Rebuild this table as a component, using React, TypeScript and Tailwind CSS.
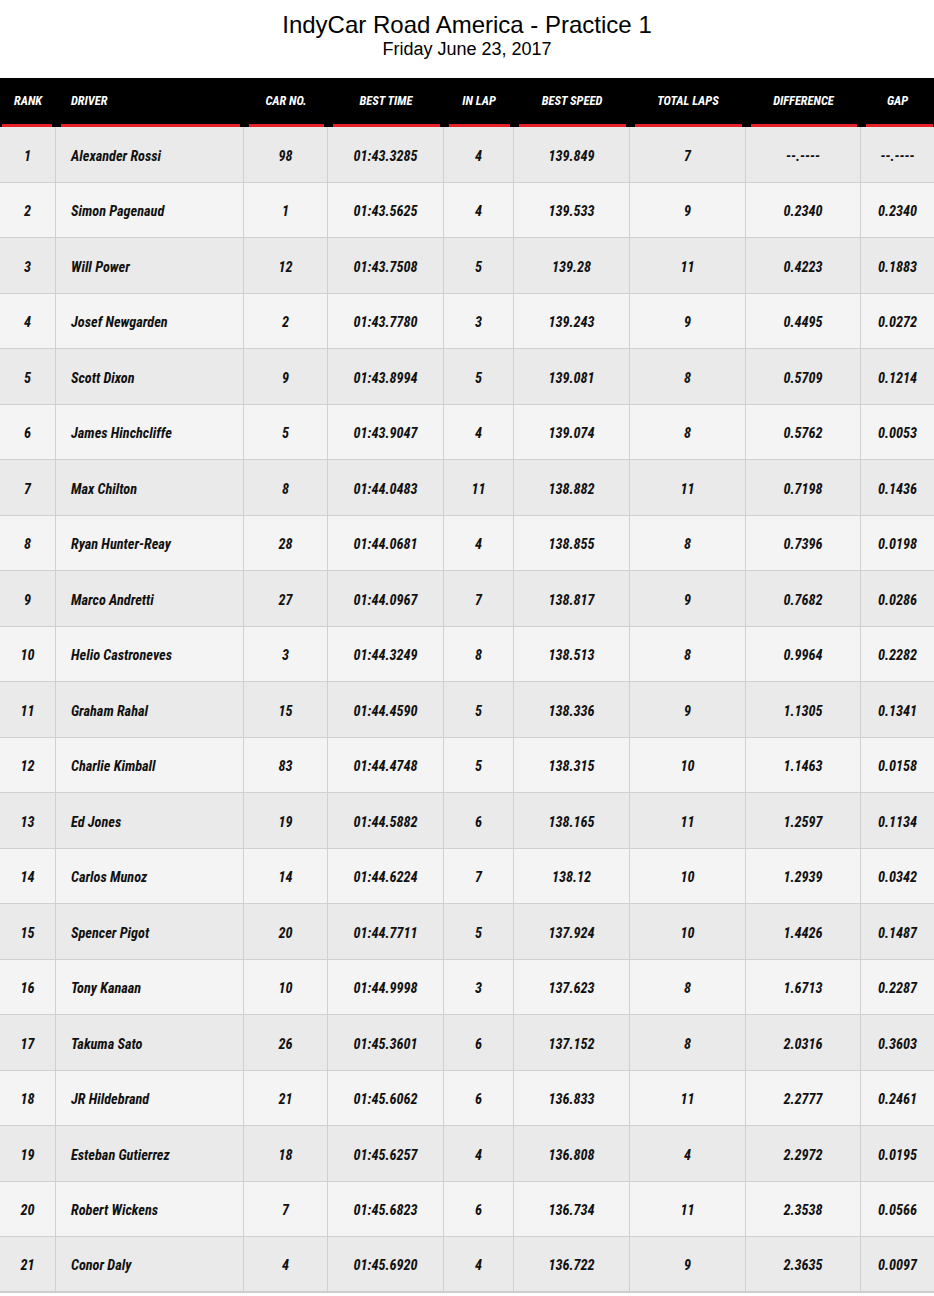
import React from "react";

const rows: [string, string, string, string, string, string, string, string, string][] = [
  ["1", "Alexander Rossi", "98", "01:43.3285", "4", "139.849", "7", "--.----", "--.----"],
  ["2", "Simon Pagenaud", "1", "01:43.5625", "4", "139.533", "9", "0.2340", "0.2340"],
  ["3", "Will Power", "12", "01:43.7508", "5", "139.28", "11", "0.4223", "0.1883"],
  ["4", "Josef Newgarden", "2", "01:43.7780", "3", "139.243", "9", "0.4495", "0.0272"],
  ["5", "Scott Dixon", "9", "01:43.8994", "5", "139.081", "8", "0.5709", "0.1214"],
  ["6", "James Hinchcliffe", "5", "01:43.9047", "4", "139.074", "8", "0.5762", "0.0053"],
  ["7", "Max Chilton", "8", "01:44.0483", "11", "138.882", "11", "0.7198", "0.1436"],
  ["8", "Ryan Hunter-Reay", "28", "01:44.0681", "4", "138.855", "8", "0.7396", "0.0198"],
  ["9", "Marco Andretti", "27", "01:44.0967", "7", "138.817", "9", "0.7682", "0.0286"],
  ["10", "Helio Castroneves", "3", "01:44.3249", "8", "138.513", "8", "0.9964", "0.2282"],
  ["11", "Graham Rahal", "15", "01:44.4590", "5", "138.336", "9", "1.1305", "0.1341"],
  ["12", "Charlie Kimball", "83", "01:44.4748", "5", "138.315", "10", "1.1463", "0.0158"],
  ["13", "Ed Jones", "19", "01:44.5882", "6", "138.165", "11", "1.2597", "0.1134"],
  ["14", "Carlos Munoz", "14", "01:44.6224", "7", "138.12", "10", "1.2939", "0.0342"],
  ["15", "Spencer Pigot", "20", "01:44.7711", "5", "137.924", "10", "1.4426", "0.1487"],
  ["16", "Tony Kanaan", "10", "01:44.9998", "3", "137.623", "8", "1.6713", "0.2287"],
  ["17", "Takuma Sato", "26", "01:45.3601", "6", "137.152", "8", "2.0316", "0.3603"],
  ["18", "JR Hildebrand", "21", "01:45.6062", "6", "136.833", "11", "2.2777", "0.2461"],
  ["19", "Esteban Gutierrez", "18", "01:45.6257", "4", "136.808", "4", "2.2972", "0.0195"],
  ["20", "Robert Wickens", "7", "01:45.6823", "6", "136.734", "11", "2.3538", "0.0566"],
  ["21", "Conor Daly", "4", "01:45.6920", "4", "136.722", "9", "2.3635", "0.0097"],
];

const cols = [
  { label: "RANK", w: "w-[56px]", bar: "ml-[2px] mr-[4px]", align: "justify-center" },
  { label: "DRIVER", w: "w-[188px]", bar: "ml-[5px] mr-[4px]", align: "justify-start pl-[15px]" },
  { label: "CAR NO.", w: "w-[84px]", bar: "ml-[5px] mr-[4px]", align: "justify-center" },
  { label: "BEST TIME", w: "w-[116px]", bar: "ml-[5px] mr-[4px]", align: "justify-center" },
  { label: "IN LAP", w: "w-[70px]", bar: "ml-[5px] mr-[4px]", align: "justify-center" },
  { label: "BEST SPEED", w: "w-[116px]", bar: "ml-[5px] mr-[4px]", align: "justify-center" },
  { label: "TOTAL LAPS", w: "w-[116px]", bar: "ml-[5px] mr-[4px]", align: "justify-center" },
  { label: "DIFFERENCE", w: "w-[115px]", bar: "ml-[5px] mr-[4px]", align: "justify-center" },
  { label: "GAP", w: "flex-1", bar: "ml-[5px] mr-[1px]", align: "justify-center" },
];

const cond = {
  fontFamily: '"Roboto Condensed", "Liberation Sans Narrow", "Arial Narrow", Roboto, sans-serif',
};

export default function App() {
  return (
    <div className="w-[934px] bg-white">
      <div className="flex flex-col items-center pt-[11px] h-[78px] text-black" style={{ fontFamily: '"Liberation Sans", Arial, sans-serif' }}>
        <div className="text-[24px] leading-[28px]">IndyCar Road America - Practice 1</div>
        <div className="text-[18px] leading-[20px]">Friday June 23, 2017</div>
      </div>
      <div className="flex bg-black h-[49px]" style={cond}>
        {cols.map((c, i) => (
          <div key={i} className={`${c.w} flex flex-col`}>
            <div className={`flex-1 flex items-center ${c.align} text-white text-[12.5px] font-bold italic`}>
              <span>{c.label}</span>
            </div>
            <div className={`h-[3px] bg-[#e8202a] ${c.bar}`} />
          </div>
        ))}
      </div>
      <div style={cond}>
        {rows.map((r, ri) => (
          <div
            key={ri}
            className={`flex h-[55.52px] ${ri === rows.length - 1 ? "border-b-2 border-[#cdcdcd]" : "border-b border-[#d0d0d0]"} ${ri % 2 === 0 ? "bg-[#eaeaea]" : "bg-[#f4f4f4]"}`}
          >
            {r.map((v, ci) => (
              <div
                key={ci}
                className={`${cols[ci].w} flex items-center pt-[4px] ${cols[ci].align} ${ci < 8 ? "border-r border-[#d0d0d0]" : ""} text-[14.3px] font-bold italic text-[#111]`}
              >
                {v}
              </div>
            ))}
          </div>
        ))}
      </div>
    </div>
  );
}
